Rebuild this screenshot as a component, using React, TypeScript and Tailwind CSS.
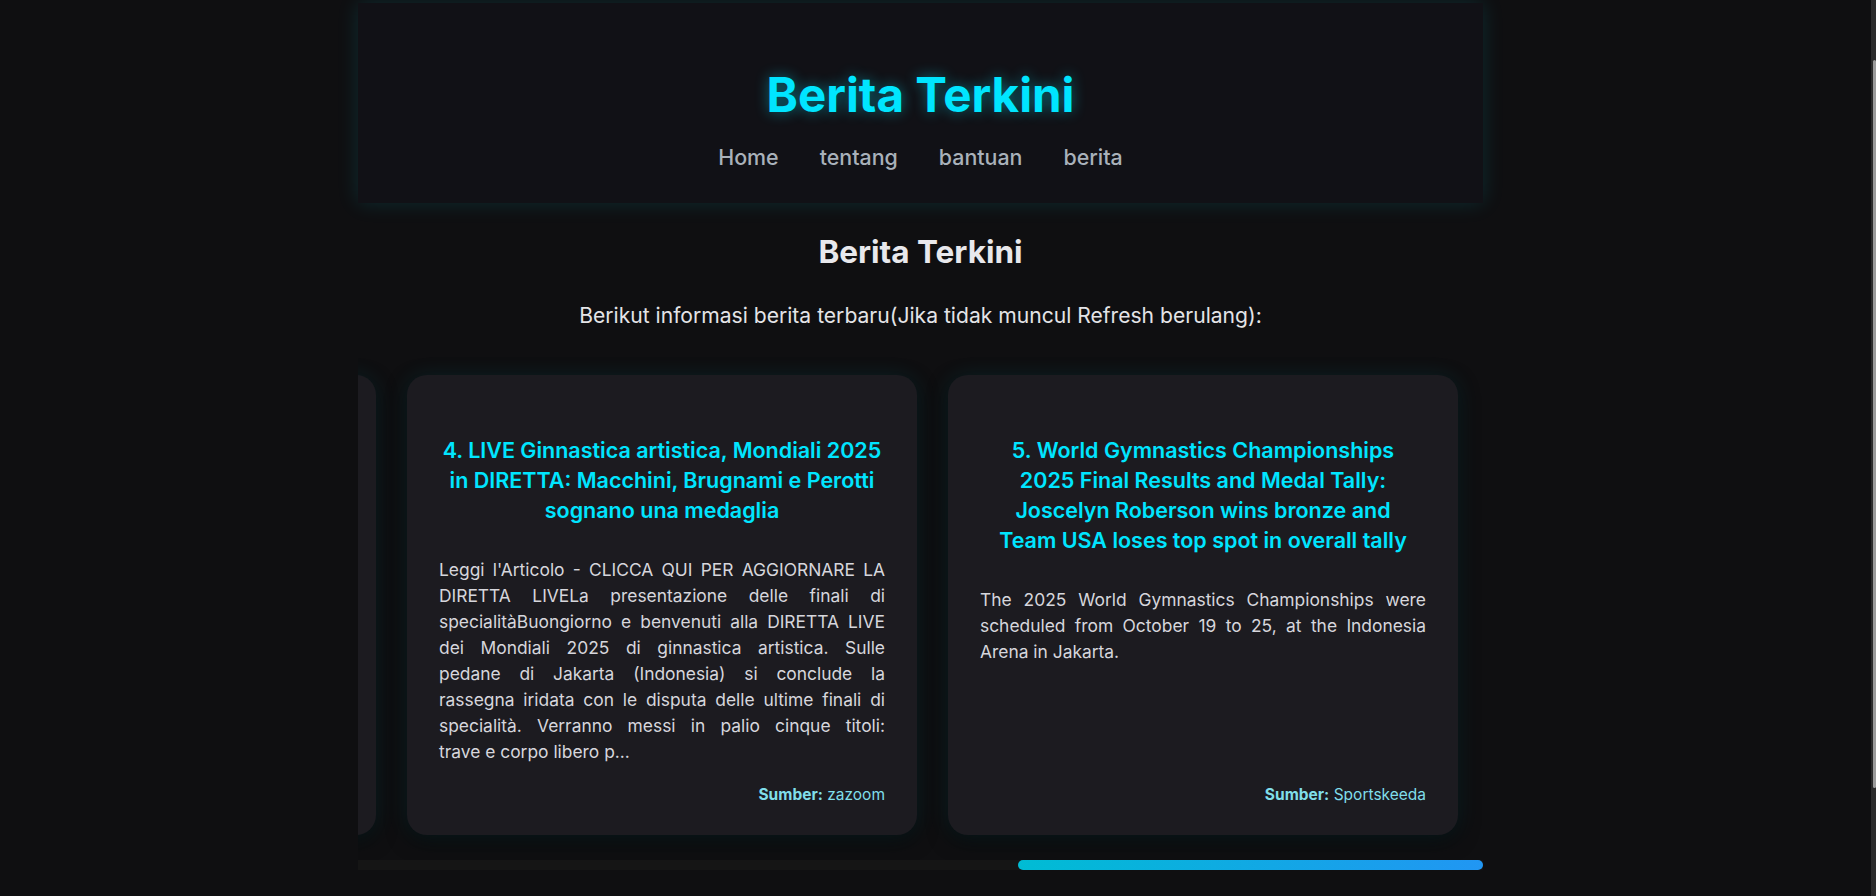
import { useLayoutEffect, useRef } from "react";

type News = {
  title: string;
  body: string;
  source: string;
};

const news: News[] = [
  {
    title: "1. Timnas Indonesia bersiap hadapi laga uji coba internasional bulan depan",
    body: "Pelatih kepala mengumumkan daftar pemain yang dipanggil untuk pemusatan latihan jelang laga uji coba internasional di Jakarta.",
    source: "detik",
  },
  {
    title: "2. Harga emas Antam hari ini naik tipis, cek rinciannya",
    body: "Harga emas batangan produksi Antam kembali bergerak naik pada perdagangan pagi ini setelah sempat melemah di akhir pekan.",
    source: "Kompas",
  },
  {
    title: "3. Cuaca ekstrem diprediksi melanda sejumlah wilayah pekan ini",
    body: "BMKG mengimbau masyarakat untuk waspada terhadap potensi hujan lebat disertai angin kencang di beberapa provinsi.",
    source: "CNN Indonesia",
  },
  {
    title: "4. LIVE Ginnastica artistica, Mondiali 2025 in DIRETTA: Macchini, Brugnami e Perotti sognano una medaglia",
    body: "Leggi l'Articolo - CLICCA QUI PER AGGIORNARE LA DIRETTA LIVELa presentazione delle finali di specialitàBuongiorno e benvenuti alla DIRETTA LIVE dei Mondiali 2025 di ginnastica artistica. Sulle pedane\u00a0di Jakarta (Indonesia) si conclude la rassegna\u00a0iridata con le disputa delle ultime finali di specialità. Verranno messi in palio cinque titoli: trave\u00a0e\u00a0corpo libero p...",
    source: "zazoom",
  },
  {
    title: "5. World Gymnastics Championships 2025\u00a0Final Results and Medal Tally: Joscelyn Roberson wins bronze and Team\u00a0USA loses top spot in overall tally",
    body: "The 2025 World Gymnastics Championships were scheduled from October 19 to 25, at the Indonesia Arena in Jakarta.",
    source: "Sportskeeda",
  },
];

function NewsCard({ item }: { item: News }) {
  return (
    <article className="flex h-[460px] w-[510px] shrink-0 flex-col rounded-[20px] bg-[#1c1b20] px-8 pb-[30px] pt-[60px] shadow-[0_0_22px_rgba(0,229,255,0.09),0_6px_20px_rgba(0,0,0,0.5)]">
      <h3 className="text-center text-[21.5px] font-semibold leading-[30px] text-[#00e5ff]">
        {item.title}
      </h3>
      <p className="mt-8 text-justify text-[17.4px] leading-[26px] text-[#d6d6dc]">
        {item.body}
      </p>
      <p className="mt-auto text-right text-[15.5px] leading-[21px] text-[#80deea]">
        <span className="font-bold">Sumber:</span> {item.source}
      </p>
    </article>
  );
}

export default function App() {
  const scroller = useRef<HTMLDivElement>(null);

  useLayoutEffect(() => {
    const el = scroller.current;
    if (el) el.scrollLeft = el.scrollWidth;
  }, []);

  return (
    <div className="h-screen overflow-hidden bg-[#0f0f11] font-['Inter',sans-serif] text-[#e4e4e7]">
      <div className="ml-[358px] w-[1125px]">
        {/* Header */}
        <header className="mt-[3px] flex h-[200px] flex-col items-center bg-[#111116] pt-[65px] shadow-[0_0_20px_rgba(0,229,255,0.13)]">
          <h1 className="text-[47.5px] font-bold leading-[54px] text-[#00e5ff] [text-shadow:0_0_14px_rgba(0,229,255,0.45)]">
            Berita Terkini
          </h1>
          <nav className="mt-5 flex gap-[41px] text-[21.4px] font-medium leading-[30px] text-[#a9b1ba]">
            <a>Home</a>
            <a>tentang</a>
            <a>bantuan</a>
            <a>berita</a>
          </nav>
        </header>

        {/* Section */}
        <section className="flex flex-col items-center">
          <h2 className="mt-[31px] text-[31.5px] font-bold leading-[35px] text-[#e8e8ec]">Berita Terkini</h2>
          <p className="mt-[33px] text-[21.1px] leading-[27px] text-[#e4e4e7]">
            Berikut informasi berita terbaru(Jika tidak muncul Refresh berulang):
          </p>
        </section>

        {/* News carousel, scrolled to the end */}
        <div ref={scroller} className="mt-[21px] flex gap-[31px] overflow-hidden p-[25px]">
          {news.map((item) => (
            <NewsCard key={item.title} item={item} />
          ))}
        </div>
        <div className="flex h-[10px] justify-end bg-[#151515]">
          <div className="h-full w-[465px] rounded-full bg-[linear-gradient(90deg,#00bcd4,#2196f3)]" />
        </div>
      </div>

      {/* page scrollbar */}
      <div className="fixed right-0 top-0 h-full w-[5px] bg-[#2b2b2b]">
        <div className="absolute right-0 top-[60px] h-[728px] w-[3px] rounded-sm bg-[#9a9a9a]" />
      </div>
    </div>
  );
}
